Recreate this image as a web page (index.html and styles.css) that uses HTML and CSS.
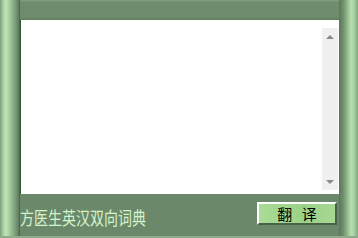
FILE: index.html
```html
<!DOCTYPE html>
<html lang="zh-CN">
<head>
    <meta charset="UTF-8">
    <meta name="viewport" content="width=device-width, initial-scale=1.0">
    <title>方医生英汉双向词典</title>
    <link rel="stylesheet" href="styles.css">
</head>
<body>
    <div class="window">
        <div class="bevel bevel-left"></div>
        <div class="center">
            <div class="top-bar"></div>
            <div class="text-box">
                <div class="text-area"></div>
                <div class="scrollbar">
                    <span class="arrow arrow-up"></span>
                    <span class="arrow arrow-down"></span>
                </div>
            </div>
            <div class="bottom-bar">
                <div class="title">方医生英汉双向词典</div>
                <button class="translate-btn">翻 译</button>
            </div>
        </div>
        <div class="bevel bevel-right"></div>
    </div>
</body>
</html>
```

FILE: styles.css
```css
body {
    margin: 0;
    width: 358px;
    height: 238px;
    overflow: hidden;
    background-color: #6d896b;
    font-family: "Noto Sans CJK SC", "Noto Sans", sans-serif;
}

.window {
    display: flex;
    width: 358px;
    height: 238px;
    border-bottom: 2px solid #8fab8c;
    box-sizing: border-box;
}

/* Боковые рамки */
.bevel {
    height: 100%;
}

.bevel-left {
    width: 20px;
    background: linear-gradient(to right, #7e9d7b 0px, #a6cca0 3px, #bfe6b8 6px, #a2c79c 10px, #7f9f7d 15px, #5d7b5c 19px, #2f5a3a 20px);
}

.bevel-right {
    width: 19px;
    background: linear-gradient(to right, #5a785a 0px, #6e8e6c 4px, #8fb58b 8px, #b7e0b0 12px, #a8d2a2 15px, #83a581 19px);
}

.center {
    flex: 1;
    display: flex;
    flex-direction: column;
}

.top-bar {
    height: 20px;
    background: linear-gradient(to bottom, #85a382 0px, #6f8c6d 2px, #6e8b6c 17px, #62805f 20px);
}

/* Текстовое поле */
.text-box {
    height: 174px;
    background-color: #ffffff;
    display: flex;
    border-left: 1px solid #2f5a3a;
    box-sizing: border-box;
}

.text-area {
    flex: 1;
}

.scrollbar {
    width: 16px;
    margin: 8px 1px 4px 0;
    background-color: #f0f0f0;
    display: flex;
    flex-direction: column;
    justify-content: space-between;
    align-items: center;
    padding: 7px 0 6px;
    box-sizing: border-box;
}

.arrow {
    width: 0;
    height: 0;
    border-left: 4px solid transparent;
    border-right: 4px solid transparent;
}

.arrow-up {
    border-bottom: 4px solid #8a8a8a;
}

.arrow-down {
    border-top: 4px solid #8a8a8a;
}

.bottom-bar {
    flex: 1;
    display: flex;
    align-items: center;
    justify-content: space-between;
    padding: 0 2px 0 0;
    background-color: #6b886a;
}

.title {
    color: #d6f4cc;
    font-size: 14px;
    line-height: 20px;
    margin-top: 4px;
    transform: scaleY(1.3);
    transform-origin: left center;
}

.translate-btn {
    width: 80px;
    height: 23px;
    margin-top: -4px;
    padding: 0;
    font-family: "Noto Sans CJK SC", sans-serif;
    font-size: 15px;
    line-height: 19px;
    color: #000000;
    background: linear-gradient(to right, #a9dc95, #9cd288 60%, #a6d893);
    border: 2px solid;
    border-color: #ffffff #4a6049 #4a6049 #ffffff;
    word-spacing: 6px;
}
```
